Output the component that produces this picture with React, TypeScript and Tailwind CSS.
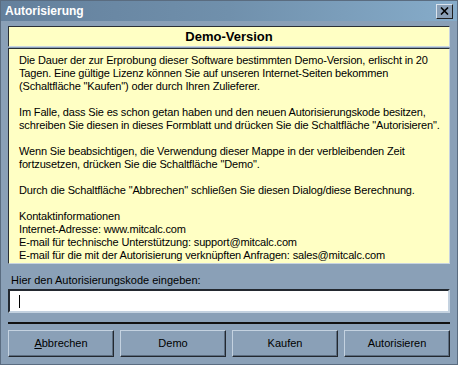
import React from "react";

const font = { fontFamily: '"Liberation Sans", Arial, sans-serif' };

function Btn({ children }: { children: React.ReactNode }) {
  return (
    <div className="w-[106px] h-[27px] flex items-center justify-center text-[11px] text-black bg-[#8aa0b7] border border-t-[#c4d2e0] border-l-[#c4d2e0] border-b-[#23282f] border-r-[#23282f] shadow-[inset_-1px_-1px_0_#5c6d80]">
      {children}
    </div>
  );
}

const lines: string[] = [
  "Die Dauer der zur Erprobung dieser Software bestimmten Demo-Version, erlischt in 20",
  "Tagen. Eine gültige Lizenz können Sie auf unseren Internet-Seiten bekommen",
  '(Schaltfläche "Kaufen") oder durch Ihren Zulieferer.',
  "",
  "Im Falle, dass Sie es schon getan haben und den neuen Autorisierungskode besitzen,",
  'schreiben Sie diesen in dieses Formblatt und drücken Sie die Schaltfläche "Autorisieren".',
  "",
  "Wenn Sie beabsichtigen, die Verwendung dieser Mappe in der verbleibenden Zeit",
  'fortzusetzen, drücken Sie die Schaltfläche "Demo".',
  "",
  'Durch die Schaltfläche "Abbrechen" schließen Sie diesen Dialog/diese Berechnung.',
  "",
  "Kontaktinformationen",
  "Internet-Adresse: www.mitcalc.com",
  "E-mail für technische Unterstützung: support@mitcalc.com",
  "E-mail für die mit der Autorisierung verknüpften Anfragen: sales@mitcalc.com",
];

export default function App() {
  return (
    <div className="w-[458px] h-[365px] bg-[#8aa0b7] flex flex-col border border-[#5a6c80] overflow-hidden" style={font}>
      <div className="h-[20px] shrink-0 flex items-center justify-between px-[4px] bg-gradient-to-r from-[#64809c] via-[#7090ac] to-[#86acca]">
        <span className="text-white font-bold text-[12px] leading-none">Autorisierung</span>
        <div className="w-[17px] h-[15px] bg-[#8aa0b7] border border-t-[#dbe4ee] border-l-[#dbe4ee] border-b-[#202020] border-r-[#202020] flex items-center justify-center">
          <svg width="9" height="8" viewBox="0 0 9 8">
            <path d="M1 0.5 L8 7.5 M8 0.5 L1 7.5" stroke="#000" strokeWidth="1.6" />
          </svg>
        </div>
      </div>
      <div className="flex flex-col px-[7px] pt-[5px]">
        <div className="h-[21px] bg-[#ffffc4] border border-t-[#2a2f36] border-l-[#2a2f36] border-b-[#c8d4e0] border-r-[#c8d4e0] flex items-center justify-center">
          <span className="font-bold text-[13px] text-black">Demo-Version</span>
        </div>
        <div className="mt-[1px] h-[216px] overflow-hidden bg-[#ffffc4] border border-t-[#2a2f36] border-l-[#2a2f36] border-b-[#c8d4e0] border-r-[#c8d4e0] px-[10px] pt-[5px] text-[11px] leading-[13px] text-black tracking-[-0.15px] whitespace-nowrap">
          {lines.map((l, i) => (
            <div key={i} className="h-[13px]">{l}</div>
          ))}
        </div>
        <div className="mt-[10px] pl-[3px] text-[11px] leading-[13px] text-black">Hier den Autorisierungskode eingeben:</div>
        <div className="mt-[2px] h-[24px] bg-white border-2 border-t-[#23282f] border-l-[#23282f] border-b-[#c4d2e0] border-r-[#c4d2e0] flex items-center pl-[9px]">
          <div className="w-[1px] h-[13px] bg-black" />
        </div>
        <div className="mt-[9px] h-[2px] bg-[#111]" />
        <div className="mt-[6px] flex justify-between">
          <Btn><span><span className="underline">A</span>bbrechen</span></Btn>
          <Btn>Demo</Btn>
          <Btn>Kaufen</Btn>
          <Btn>Autorisieren</Btn>
        </div>
      </div>
    </div>
  );
}
